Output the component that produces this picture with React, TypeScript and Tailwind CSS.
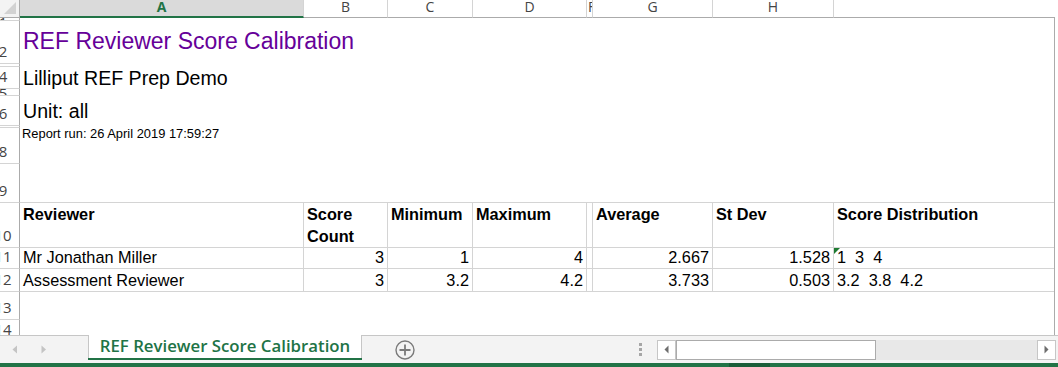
import React from "react";

const GRID = "border-[#d4d4d4]";

function Row({
  h,
  label,
  tiny,
  children,
}: {
  h: string;
  label?: string;
  tiny?: boolean;
  children?: React.ReactNode;
}) {
  return (
    <div className={`flex shrink-0 ${h}`}>
      <div
        className={`w-[20px] shrink-0 overflow-hidden border-r border-r-[#ababab] border-b border-b-[#d4d4d4] flex ${
          tiny ? "items-start" : "items-end pb-[4px]"
        }`}
      >
        {label && (
          <div
            className={`w-[30px] -ml-[12px] shrink-0 text-center font-['Open_Sans',sans-serif] text-[15px] leading-none text-[#444] ${
              tiny ? "-mt-[3px]" : ""
            }`}
          >
            {label}
          </div>
        )}
      </div>
      <div className="flex flex-1 min-w-0">{children}</div>
    </div>
  );
}

const COLS = [
  "w-[284px]",
  "w-[84px]",
  "w-[85px]",
  "w-[114px]",
  "w-[6px]",
  "w-[120px]",
  "w-[121px]",
  "w-[220px]",
];

function HeadCell({ w, children, last }: { w: string; children?: React.ReactNode; last?: boolean }) {
  return (
    <div
      className={`${w} shrink-0 border-b ${last ? "" : "border-r"} ${GRID} pl-[3px] pr-[2px] font-bold text-[16.3px] leading-[22px] text-black`}
    >
      {children}
    </div>
  );
}

function DataCell({
  w,
  children,
  num,
  last,
  flag,
}: {
  w: string;
  children?: React.ReactNode;
  num?: boolean;
  last?: boolean;
  flag?: boolean;
}) {
  return (
    <div
      className={`${w} shrink-0 relative border-b ${last ? "" : "border-r"} ${GRID} flex items-end pb-[3px] text-[16.3px] leading-none text-black whitespace-pre ${
        num ? "justify-end pr-[3px]" : "justify-start pl-[3px]"
      }`}
    >
      {flag && (
        <svg className="absolute left-0 top-0" width="7" height="7" viewBox="0 0 7 7">
          <path d="M0 0 L6 0 L0 6 Z" fill="#1e7b32" />
        </svg>
      )}
      {children}
    </div>
  );
}

export default function App() {
  const hdr =
    "shrink-0 border-r border-r-[#d4d4d4] border-b border-b-[#ababab] flex justify-center font-['Open_Sans',sans-serif] text-[14px] leading-none text-[#444]";
  return (
    <div className="w-[1058px] h-[367px] bg-white overflow-hidden flex flex-col font-['Liberation_Sans',Arial,sans-serif]">
      {/* column headers */}
      <div className="flex h-[18px] shrink-0">
        <div className="w-[20px] shrink-0 border-r border-b border-[#ababab] bg-[#f3f3f3] relative overflow-hidden">
          <svg className="absolute left-0 top-0" width="19" height="17" viewBox="0 0 19 17">
            <path d="M16 2 L16 14 L4 14 Z" fill="#d2d2d2" />
          </svg>
        </div>
        <div className="w-[284px] shrink-0 bg-[#dadada] border-r border-r-[#d4d4d4] border-b-2 border-b-[#217346] flex justify-center font-['Open_Sans',sans-serif] font-bold text-[14px] leading-none text-[#217346]">
          A
        </div>
        <div className={`w-[84px] ${hdr}`}>B</div>
        <div className={`w-[85px] ${hdr}`}>C</div>
        <div className={`w-[114px] ${hdr}`}>D</div>
        <div className="w-[6px] shrink-0 border-r border-r-[#d4d4d4] border-b border-b-[#ababab] flex justify-start pl-[1px] font-['Open_Sans',sans-serif] text-[14px] leading-none text-[#444] overflow-hidden">
          F
        </div>
        <div className={`w-[120px] ${hdr}`}>G</div>
        <div className={`w-[121px] ${hdr}`}>H</div>
        <div className="w-[221px] shrink-0 border-b border-b-[#ababab]" />
        <div className="flex-1" />
      </div>

      {/* sheet body */}
      <div className="w-[1055px] h-[317px] shrink-0 overflow-hidden border-r border-[#ababab] flex flex-col">
        <Row h="h-[3px]" label="1" tiny />
        <Row h="h-[43px]" label="2">
          <div className="pl-[3px] pt-[9px] text-[23px] leading-none text-[#660099] whitespace-nowrap">
            REF Reviewer Score Calibration
          </div>
        </Row>
        <Row h="h-[3px]" tiny />
        <Row h="h-[22px]" label="4">
          <div className="pl-[3px] pt-[1.5px] text-[19.6px] leading-none text-black whitespace-nowrap">
            Lilliput REF Prep Demo
          </div>
        </Row>
        <Row h="h-[7px]" label="5" tiny />
        <Row h="h-[30px]" label="6">
          <div className="pl-[3px] pt-[5.5px] text-[19.6px] leading-none text-black whitespace-nowrap">Unit: all</div>
        </Row>
        <Row h="h-[2px]" tiny />
        <Row h="h-[36px]" label="8">
          <div className="pl-[2px] pt-0 text-[12.9px] leading-none text-black whitespace-nowrap">
            Report run: 26 April 2019 17:59:27
          </div>
        </Row>
        <Row h="h-[39px]" label="9">
          <div className={`flex-1 border-b ${GRID}`} />
        </Row>
        <Row h="h-[45px]" label="10">
          <HeadCell w={COLS[0]}>Reviewer</HeadCell>
          <HeadCell w={COLS[1]}>Score Count</HeadCell>
          <HeadCell w={COLS[2]}>Minimum</HeadCell>
          <HeadCell w={COLS[3]}>Maximum</HeadCell>
          <HeadCell w={COLS[4]} />
          <HeadCell w={COLS[5]}>Average</HeadCell>
          <HeadCell w={COLS[6]}>St Dev</HeadCell>
          <HeadCell w={COLS[7]} last>
            Score Distribution
          </HeadCell>
        </Row>
        <Row h="h-[21px]" label="11">
          <DataCell w={COLS[0]}>Mr Jonathan Miller</DataCell>
          <DataCell w={COLS[1]} num>3</DataCell>
          <DataCell w={COLS[2]} num>1</DataCell>
          <DataCell w={COLS[3]} num>4</DataCell>
          <DataCell w={COLS[4]} />
          <DataCell w={COLS[5]} num>2.667</DataCell>
          <DataCell w={COLS[6]} num>1.528</DataCell>
          <DataCell w={COLS[7]} last flag>
            {"1  3  4"}
          </DataCell>
        </Row>
        <Row h="h-[23px]" label="12">
          <DataCell w={COLS[0]}>Assessment Reviewer</DataCell>
          <DataCell w={COLS[1]} num>3</DataCell>
          <DataCell w={COLS[2]} num>3.2</DataCell>
          <DataCell w={COLS[3]} num>4.2</DataCell>
          <DataCell w={COLS[4]} />
          <DataCell w={COLS[5]} num>3.733</DataCell>
          <DataCell w={COLS[6]} num>0.503</DataCell>
          <DataCell w={COLS[7]} last>
            {"3.2  3.8  4.2"}
          </DataCell>
        </Row>
        <Row h="h-[28px]" label="13" />
        <Row h="h-[22px]" label="14" />
      </div>

      {/* sheet tabs */}
      <div className="flex h-[28px] shrink-0 bg-[#f3f3f3]">
        <div className="w-[88px] shrink-0 border-t border-[#c6c6c6] flex items-center">
          <svg className="ml-[12px]" width="6" height="9" viewBox="0 0 6 9">
            <path d="M5 0.5 L0.5 4.5 L5 8.5 Z" fill="#c4c4c4" />
          </svg>
          <svg className="ml-[23px]" width="6" height="9" viewBox="0 0 6 9">
            <path d="M0.5 0.5 L5 4.5 L0.5 8.5 Z" fill="#c4c4c4" />
          </svg>
        </div>
        <div className="w-[274px] shrink-0 flex flex-col">
          <div className="h-[23px] bg-white border-l border-r border-[#c6c6c6] flex items-center justify-center font-['Open_Sans',sans-serif] font-semibold text-[16.8px] leading-none text-[#217346] whitespace-nowrap">
            REF Reviewer Score Calibration
          </div>
          <div className="h-[2px] bg-[#217346]" />
        </div>
        <div className="flex-1 border-t border-[#c6c6c6] flex items-center">
          <svg className="ml-[33px] shrink-0" width="20" height="20" viewBox="0 0 20 20">
            <circle cx="10" cy="10" r="9" fill="none" stroke="#7a7a7a" strokeWidth="1.4" />
            <path d="M10 4.5 V15.5 M4.5 10 H15.5" stroke="#7a7a7a" strokeWidth="1.8" />
          </svg>
          <div className="ml-[224px] flex flex-col gap-[2px] shrink-0">
            <div className="w-[3px] h-[3px] bg-[#a6a6a6]" />
            <div className="w-[3px] h-[3px] bg-[#a6a6a6]" />
            <div className="w-[3px] h-[3px] bg-[#a6a6a6]" />
          </div>
          <div className="ml-[15px] flex h-[20px] shrink-0">
            <div className="w-[19px] h-[20px] border border-[#c6c6c6] bg-white flex items-center justify-center">
              <svg width="5" height="9" viewBox="0 0 5 9">
                <path d="M4.5 0.5 L0.5 4.5 L4.5 8.5 Z" fill="#6e6e6e" />
              </svg>
            </div>
            <div className="w-[200px] h-[20px] border border-[#ababab] bg-white" />
            <div className="w-[161px] h-[20px] bg-[#e8e8e8]" />
            <div className="w-[19px] h-[20px] border border-[#c6c6c6] bg-white flex items-center justify-center">
              <svg width="5" height="9" viewBox="0 0 5 9">
                <path d="M0.5 0.5 L4.5 4.5 L0.5 8.5 Z" fill="#6e6e6e" />
              </svg>
            </div>
          </div>
        </div>
      </div>

      {/* status bar top */}
      <div className="flex h-[4px] shrink-0 bg-[#217346]">
        <div className="w-[729px] shrink-0" />
        <div className="w-[41px] shrink-0 bg-[#185c37]" />
      </div>
    </div>
  );
}
